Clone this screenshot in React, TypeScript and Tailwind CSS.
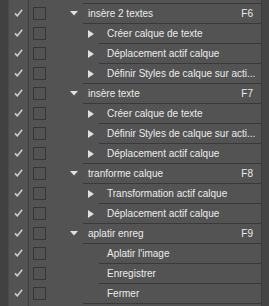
import React from 'react';

type Item = { name: string; set?: boolean; key?: string; sub?: boolean };

const items: Item[] = [
  { name: 'insère 2 textes', set: true, key: 'F6' },
  { name: 'Créer calque de texte', sub: true },
  { name: 'Déplacement actif calque', sub: true },
  { name: 'Définir Styles de calque sur acti...', sub: true },
  { name: 'insère texte', set: true, key: 'F7' },
  { name: 'Créer calque de texte', sub: true },
  { name: 'Définir Styles de calque sur acti...', sub: true },
  { name: 'Déplacement actif calque', sub: true },
  { name: 'tranforme calque', set: true, key: 'F8' },
  { name: 'Transformation actif calque', sub: true },
  { name: 'Déplacement actif calque', sub: true },
  { name: 'aplatir enreg', set: true, key: 'F9' },
  { name: "Aplatir l'image" },
  { name: 'Enregistrer' },
  { name: 'Fermer' },
];

const Check = () => (
  <svg width="9" height="8" viewBox="0 0 9 8">
    <path d="M1 4.3 L3.3 6.8 L8.2 0.8" fill="none" stroke="#c9c9c9" strokeWidth="1.7" />
  </svg>
);

const Down = () => (
  <svg width="8" height="5" viewBox="0 0 8 5">
    <polygon points="0,0 8,0 4,4.6" fill="#e0e0e0" />
  </svg>
);

const Right = () => (
  <svg width="7" height="8" viewBox="0 0 7 8">
    <polygon points="0,0 6,4 0,8" fill="#e0e0e0" />
  </svg>
);

// left columns shared by every row (check + dialog box)
const Shell: React.FC<{ className?: string; children?: React.ReactNode; cells?: boolean }> = ({ className, children, cells }) => (
  <div className={`flex ${className ?? ''}`}>
    <div className="w-[20px] shrink-0 border-r border-[#3b3b3b] flex items-center justify-center">
      {cells && <Check />}
    </div>
    <div className="w-[17px] shrink-0 flex items-center pl-[4px]">
      {cells && <div className="w-[13px] h-[13px] border border-[#363636]" />}
    </div>
    <div className="flex-1 min-w-0 flex flex-col">{children}</div>
  </div>
);

export default function App() {
  return (
    <div
      className="w-[269px] h-[306px] bg-[#535353] flex overflow-hidden text-[10px] text-[#ebebeb]"
      style={{ fontFamily: '"Liberation Sans", Arial, sans-serif' }}
    >
      <div className="w-[9px] shrink-0 bg-[#414141] border-r border-[#4a4a4a]" />
      <div className="flex-1 min-w-0 flex flex-col">
        <Shell className="h-[3px]" />
        {items.map((it, i) => {
          const wide = it.set || items[i - 1]?.set;
          return (
            <Shell key={i} className="h-[20px]" cells>
              <div className={`h-px bg-[#393939] ${wide ? 'ml-[37px]' : 'ml-[53px]'}`} />
              {it.set ? (
                <div className="h-[19px] flex items-center pl-[24px] pr-[8px]">
                  <Down />
                  <span className="ml-[10px] flex-1 whitespace-nowrap">{it.name}</span>
                  <span>{it.key}</span>
                </div>
              ) : (
                <div className={`h-[19px] flex items-center ${it.sub ? 'pl-[42px]' : 'pl-[61px]'}`}>
                  {it.sub && <Right />}
                  <span className={`whitespace-nowrap ${it.sub ? 'ml-[12px]' : ''}`}>{it.name}</span>
                </div>
              )}
            </Shell>
          );
        })}
        <Shell className="flex-1">
          <div className="h-px bg-[#393939] ml-[37px]" />
        </Shell>
      </div>
      <div className="w-[8px] shrink-0 bg-[#444444] border-l border-[#3c3c3c]" />
    </div>
  );
}
